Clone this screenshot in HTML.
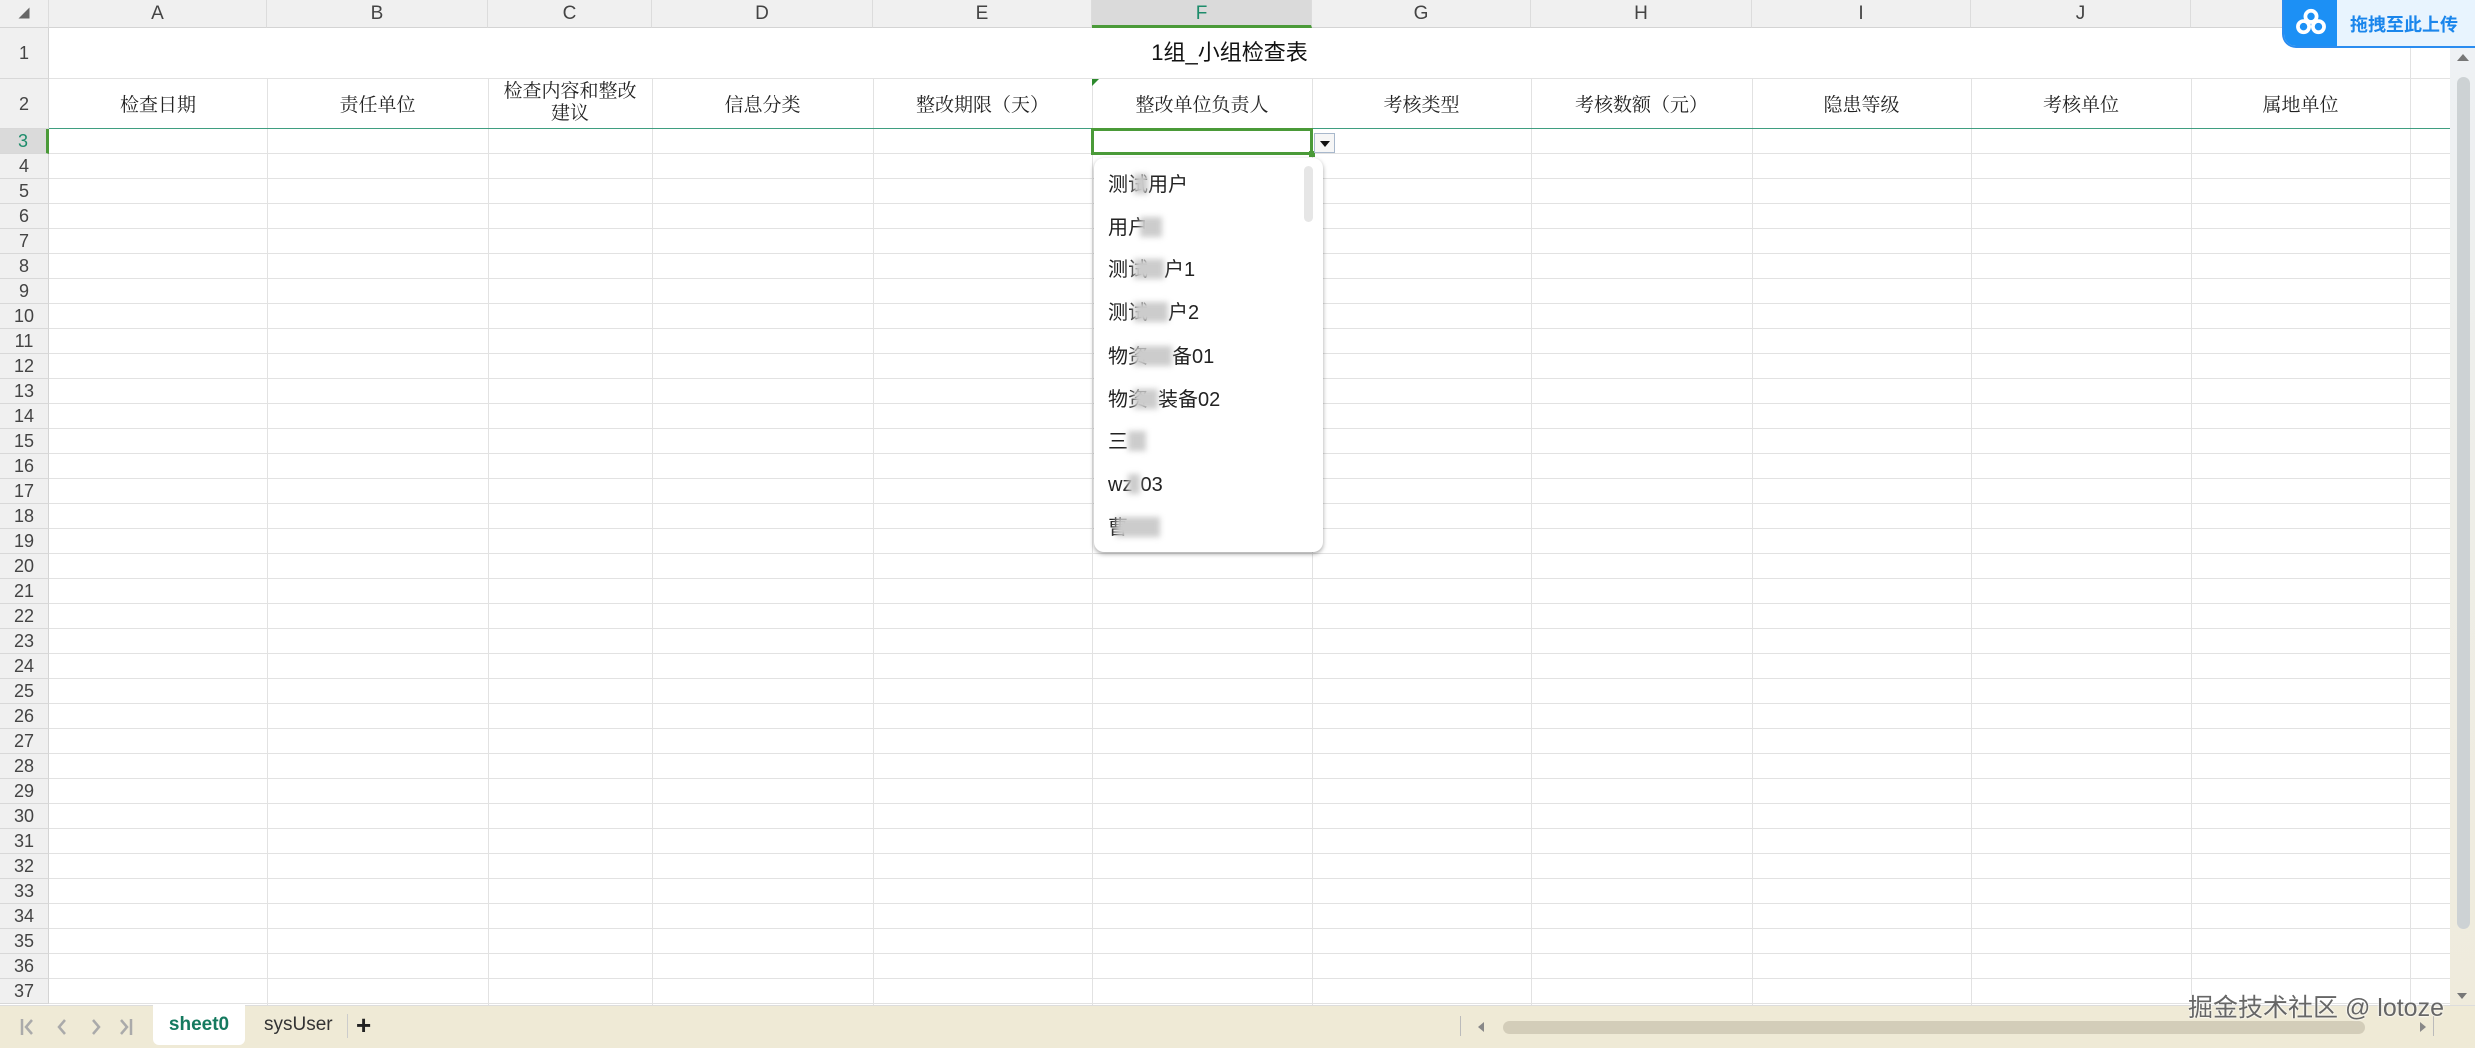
<!DOCTYPE html>
<html><head><meta charset="utf-8">
<style>
*{margin:0;padding:0;box-sizing:border-box}
body{width:2475px;height:1048px;overflow:hidden;background:#fff;position:relative;font-family:"Liberation Sans","Noto Sans CJK SC",sans-serif}
.a{position:absolute}
.colh{position:absolute;top:0;height:28px;background:#f0f0f0;border-right:1px solid #dcdcdc;border-bottom:1px solid #d4d4d4;font-size:19px;color:#444;text-align:center;line-height:28px}
.rowh{position:absolute;left:0;width:49px;background:#f0f0f0;border-bottom:1px solid #d8d8d8;border-right:1px solid #d4d4d4;font-size:18px;color:#444;text-align:center}
.vl{position:absolute;width:1px;background:#e2e2e2}
.hl{position:absolute;left:49px;width:2401px;height:1px;background:#e2e2e2}
.h2{position:absolute;top:79px;height:50px;font-family:"Noto Serif CJK SC",serif;font-size:19px;color:#222;text-align:center;display:flex;align-items:center;justify-content:center;line-height:22px}
.it{position:absolute;left:1108px;font-size:20px;color:#222;height:28px;line-height:28px;white-space:nowrap}
.bl{display:inline-block;background:#ccc;filter:blur(3px);height:20px;vertical-align:-3px}
</style></head><body>
<div id="g"></div>
<script>
var cols=[49,267,488,652,873,1092,1312,1531,1752,1971,2191,2410];
var letters="ABCDEFGHIJK";
var h="";
for(var i=0;i<11;i++){
 var x=cols[i],w=cols[i+1]-x;
 var st=i==5?"background:#dadada;color:#1d8c6b;border-bottom:3px solid #4a9a38;":"";
 h+='<div class="colh" style="left:'+x+'px;width:'+w+'px;'+st+'">'+letters[i]+'</div>';
 if(i>0)h+='<div class="vl" style="left:'+x+'px;top:79px;height:926px"></div>';
}
h+='<div class="colh" style="left:2410px;width:40px"></div>';
h+='<div class="vl" style="left:2410px;top:28px;height:977px"></div>';
h+='<div class="colh" style="left:0;width:49px;font-size:11px;color:#666">&#9698;</div>';
var rows=[[28,79],[79,129]];
for(var r=3;r<=37;r++){rows.push([129+(r-3)*25,154+(r-3)*25]);}
for(var r=0;r<rows.length;r++){
 var t=rows[r][0],b=rows[r][1];
 var st=r==2?"background:#dadada;color:#1d8c6b;border-right:3px solid #4a9a38;":"";
 h+='<div class="rowh" style="top:'+t+'px;height:'+(b-t)+'px;line-height:'+(b-t)+'px;'+st+'">'+(r+1)+'</div>';
 h+='<div class="hl" style="top:'+(b-1)+'px;'+(r==1?'background:#3f9e80;':'')+'"></div>';
}
document.getElementById('g').innerHTML=h;
</script>
<div class="a" style="left:49px;top:28px;width:2361px;height:50px;font-size:22px;color:#111;text-align:center;line-height:50px">1组_小组检查表</div>
<div class="h2" style="left:49px;width:218px">检查日期</div>
<div class="h2" style="left:267px;width:221px">责任单位</div>
<div class="h2" style="left:488px;width:164px;top:76px">检查内容和整改<br>建议</div>
<div class="h2" style="left:652px;width:221px">信息分类</div>
<div class="h2" style="left:873px;width:219px">整改期限（天）</div>
<div class="h2" style="left:1092px;width:220px">整改单位负责人</div>
<div class="h2" style="left:1312px;width:219px">考核类型</div>
<div class="h2" style="left:1531px;width:221px">考核数额（元）</div>
<div class="h2" style="left:1752px;width:219px">隐患等级</div>
<div class="h2" style="left:1971px;width:220px">考核单位</div>
<div class="h2" style="left:2191px;width:219px">属地单位</div>
<div class="a" style="left:1092px;top:79px;width:0;height:0;border-top:7px solid #2d8a2d;border-right:7px solid transparent"></div>
<div class="a" style="left:1091px;top:128px;width:222px;height:27px;border:3px solid #4a9a38"></div>
<div class="a" style="left:1309px;top:151px;width:6px;height:6px;background:#4a9a38"></div>
<div class="a" style="left:1314px;top:133px;width:21px;height:20px;border:1px solid #a8b8cc;background:#f6f6f6"><div class="a" style="left:5px;top:7px;border-top:6px solid #111;border-left:5px solid transparent;border-right:5px solid transparent"></div></div>
<div class="a" style="left:1094px;top:158px;width:229px;height:394px;background:#fff;border-radius:10px;box-shadow:0 2px 5px rgba(0,0,0,.35)"></div>
<div class="a" style="left:1304px;top:166px;width:9px;height:56px;background:#e6e6e6;border-radius:5px"></div>
<div class="it" style="top:171px">测试<span class="bl" style="width:14px;margin-left:-14px"></span>用户</div>
<div class="it" style="top:214px">用户<span class="bl" style="width:22px;margin-left:-8px"></span></div>
<div class="it" style="top:256px">测试<span class="bl" style="width:30px;margin-left:-14px"></span>户1</div>
<div class="it" style="top:299px">测试<span class="bl" style="width:34px;margin-left:-14px"></span>户2</div>
<div class="it" style="top:343px">物资<span class="bl" style="width:38px;margin-left:-14px"></span>备01</div>
<div class="it" style="top:386px">物资<span class="bl" style="width:24px;margin-left:-14px"></span>装备02</div>
<div class="it" style="top:428px">三<span class="bl" style="width:18px"></span></div>
<div class="it" style="top:471px">wz<span class="bl" style="width:12px;margin-left:-4px"></span>03</div>
<div class="it" style="top:514px">曹<span class="bl" style="width:44px;margin-left:-12px"></span></div>
<div class="a" style="left:2282px;top:0;width:193px;height:48px;background:#e8f4fe;border:2px solid #2a8cf0;border-top:none;border-right:none;border-radius:0 0 0 14px;overflow:hidden">
 <div class="a" style="left:0;top:0;width:53px;height:46px;background:#1c90f5"></div>
 <svg class="a" style="left:11px;top:8px" width="32" height="28" viewBox="0 0 34 30"><circle cx="17" cy="9" r="6" fill="none" stroke="#fff" stroke-width="4"/><circle cx="9" cy="20" r="6" fill="none" stroke="#fff" stroke-width="4"/><circle cx="25" cy="20" r="6" fill="none" stroke="#fff" stroke-width="4"/></svg>
 <div class="a" style="left:66px;top:11px;font-size:18px;font-weight:bold;color:#1a86ec">拖拽至此上传</div>
</div>
<div class="a" style="left:2450px;top:48px;width:25px;height:957px;background:linear-gradient(#eef1f4,#efebdc)"></div>
<div class="a" style="left:2457px;top:77px;width:13px;height:852px;background:#cdd2d4;border-radius:7px"></div>
<div class="a" style="left:2457px;top:54px;border-bottom:7px solid #777;border-left:6px solid transparent;border-right:6px solid transparent"></div>
<div class="a" style="left:2457px;top:993px;border-top:6px solid #777;border-left:5px solid transparent;border-right:5px solid transparent"></div>
<div class="a" style="left:0;top:1005px;width:2475px;height:43px;background:#efead6;border-top:1px solid #ddd"></div>
<svg class="a" style="left:18px;top:1016px" width="120" height="22" viewBox="0 0 120 22" fill="none" stroke="#aaa" stroke-width="2.5"><path d="M4 3v16M14 4l-6 7 6 7"/><path d="M47 4l-6 7 6 7"/><path d="M75 4l6 7-6 7"/><path d="M103 4l6 7-6 7M113 3v16"/></svg>
<div class="a" style="left:153px;top:1005px;width:92px;height:40px;background:#fff;border-radius:0 0 6px 6px;font-size:19px;font-weight:bold;color:#157a5f;text-align:center;line-height:40px">sheet0</div>
<div class="a" style="left:264px;top:1005px;font-size:19px;color:#333;line-height:40px">sysUser</div>
<div class="a" style="left:347px;top:1014px;width:1px;height:24px;background:#ccc"></div>
<div class="a" style="left:356px;top:1005px;font-size:26px;font-weight:bold;color:#222;line-height:40px">+</div>
<div class="a" style="left:1460px;top:1016px;width:1px;height:20px;background:#bbb"></div>
<div class="a" style="left:1478px;top:1022px;border-right:6px solid #888;border-top:5px solid transparent;border-bottom:5px solid transparent"></div>
<div class="a" style="left:1503px;top:1021px;width:862px;height:13px;background:#d3cdb9;border-radius:7px"></div>
<div class="a" style="left:2420px;top:1022px;border-left:6px solid #888;border-top:5px solid transparent;border-bottom:5px solid transparent"></div>
<div class="a" style="left:2433px;top:1016px;width:1px;height:20px;background:#bbb"></div>
<div class="a" style="left:2188px;top:988px;font-size:25px;color:#666;text-shadow:0 0 2px #fff,0 0 2px #fff">掘金技术社区 @ lotoze</div>
</body></html>
